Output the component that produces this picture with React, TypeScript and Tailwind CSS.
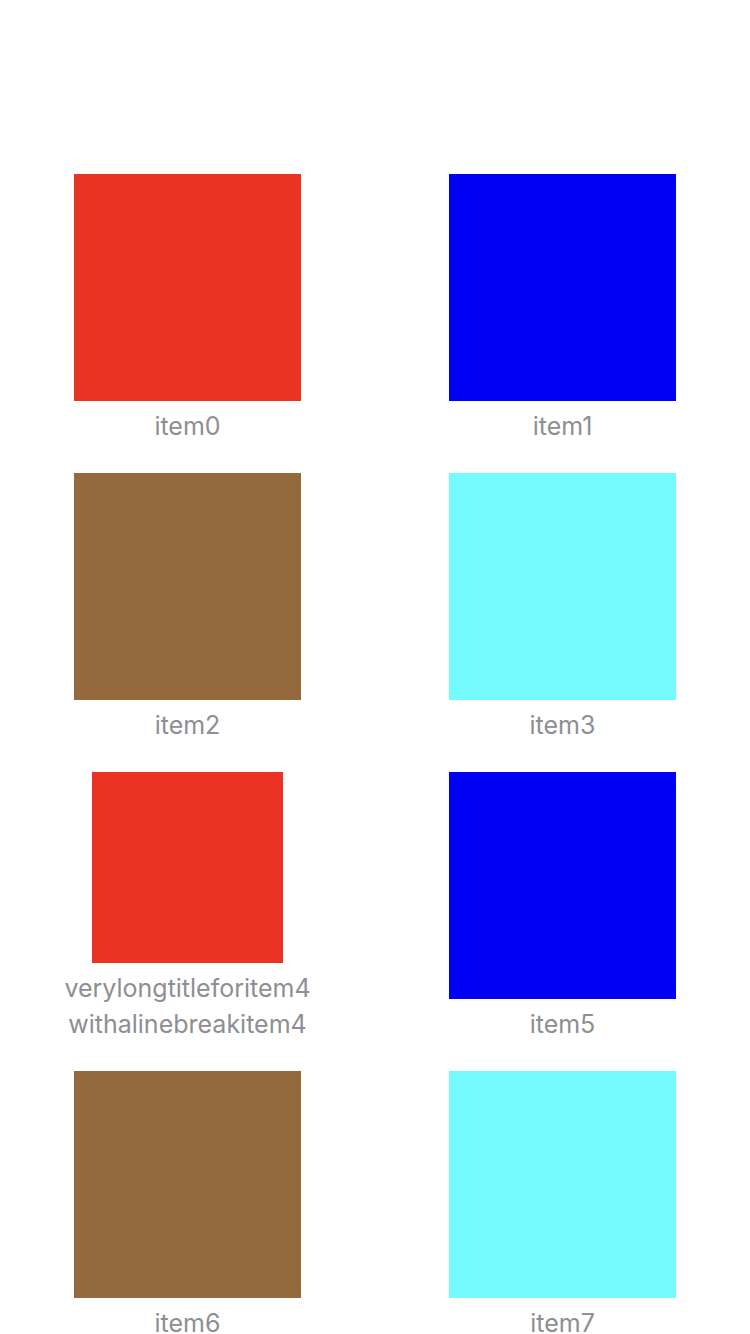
const items = [
  { title: 'item0', color: 'bg-[#eb3324]' },
  { title: 'item1', color: 'bg-[#0000f5]' },
  { title: 'item2', color: 'bg-[#946a3d]' },
  { title: 'item3', color: 'bg-[#75fbfd]' },
  { title: 'verylongtitleforitem4\nwithalinebreakitem4', color: 'bg-[#eb3324]' },
  { title: 'item5', color: 'bg-[#0000f5]' },
  { title: 'item6', color: 'bg-[#946a3d]' },
  { title: 'item7', color: 'bg-[#75fbfd]' },
]

function Tile({ title, color }: { title: string; color: string }) {
  return (
    <div className="flex h-[270px] flex-col items-center">
      {/* swatch shrinks when the caption needs more lines */}
      <div className="flex min-h-0 w-full flex-1 justify-center">
        <div className={`aspect-square h-full ${color}`} />
      </div>
      <div className="mt-[7px] whitespace-pre-line text-center text-[25px] leading-[36px] text-[#8e8e93]">
        {title}
      </div>
    </div>
  )
}

export default function App() {
  return (
    <div
      className="min-h-[1334px] bg-white pt-[174px]"
      style={{ fontFamily: 'Inter, "Noto Sans", sans-serif' }}
    >
      <div className="grid grid-cols-2 gap-y-[29px]">
        {items.map((it, i) => (
          <Tile key={i} title={it.title} color={it.color} />
        ))}
      </div>
    </div>
  )
}
